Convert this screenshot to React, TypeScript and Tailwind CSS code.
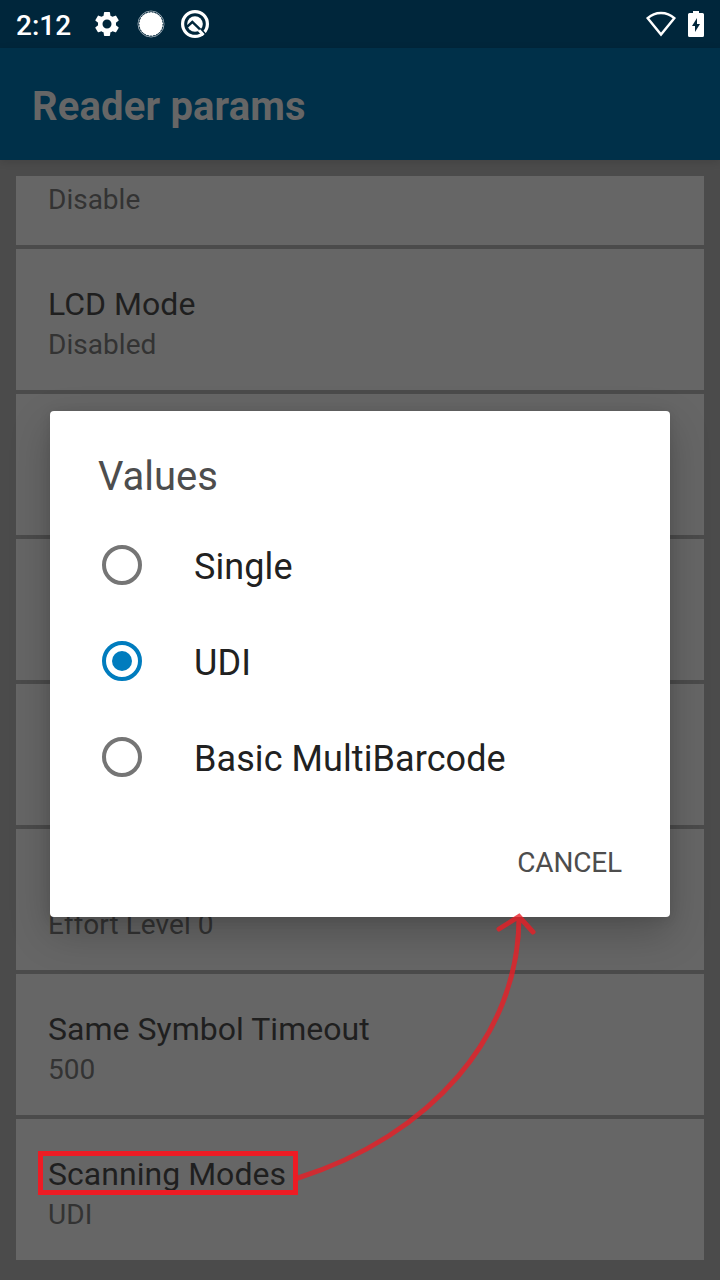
const rows = [
  { title: 'LCD Mode', value: 'Disabled' },
  { title: '', value: '' },
  { title: '', value: '' },
  { title: '', value: '' },
  { title: '', value: 'Effort Level 0' },
  { title: 'Same Symbol Timeout', value: '500' },
  { title: 'Scanning Modes', value: 'UDI' },
];

const options = ['Single', 'UDI', 'Basic MultiBarcode'];

function StatusBar() {
  return (
    <div className="flex h-12 shrink-0 items-center bg-[#00263b] text-white">
      <span className="mt-1 ml-4 w-[76px] text-[28px] leading-8 font-medium">2:12</span>
      <svg className="size-[30px]" viewBox="0 0 24 24" fill="currentColor">
        <path d="M19.14 12.94c.04-.3.06-.61.06-.94 0-.32-.02-.64-.07-.94l2.03-1.58a.49.49 0 0 0 .12-.61l-1.92-3.32a.488.488 0 0 0-.59-.22l-2.39.96c-.5-.38-1.03-.7-1.62-.94l-.36-2.54a.484.484 0 0 0-.48-.41h-3.84c-.24 0-.43.17-.47.41l-.36 2.54c-.59.24-1.13.57-1.62.94l-2.39-.96c-.22-.08-.47 0-.59.22L2.74 8.87c-.12.21-.08.47.12.61l2.03 1.58c-.05.3-.09.63-.09.94s.02.64.07.94l-2.03 1.58a.49.49 0 0 0-.12.61l1.92 3.32c.12.22.37.29.59.22l2.39-.96c.5.38 1.03.7 1.62.94l.36 2.54c.05.24.24.41.48.41h3.84c.24 0 .44-.17.47-.41l.36-2.54c.59-.24 1.13-.56 1.62-.94l2.39.96c.22.08.47 0 .59-.22l1.92-3.32c.12-.22.07-.47-.12-.61l-2.01-1.58zM12 15.6A3.6 3.6 0 1 1 12 8.4a3.6 3.6 0 0 1 0 7.2z" />
      </svg>
      <svg className="ml-[15px] size-7" viewBox="0 0 28 28">
        <circle cx="14" cy="14" r="12" fill="white" />
        <circle cx="14" cy="14" r="13" fill="none" stroke="#9aa9b3" strokeWidth="1" />
        <circle cx="14" cy="14" r="12" fill="none" stroke="#00263b" strokeWidth="1" strokeDasharray="1.5 1.5" />
      </svg>
      <svg className="ml-4 size-7" viewBox="0 0 28 28" fill="none" stroke="white">
        <circle cx="14" cy="14" r="12.4" strokeWidth="3.2" />
        <circle cx="14" cy="14" r="7.8" fill="white" stroke="none" />
        <path d="M6 16.8 11.3 12 23.2 23.4" stroke="#00263b" strokeWidth="2.4" />
        <path d="M20 20 25 24.8" stroke="#00263b" strokeWidth="2" />
        <path d="M18 20.2 22.5 25" strokeWidth="3" />
      </svg>
      <svg className="ml-auto h-[26px] w-[30px]" viewBox="0 0 30 26" fill="none" stroke="white" strokeWidth="2.5">
        <path d="M1.7 7.2C9 .2 21 .2 28.3 7.2L15 23.5Z" />
      </svg>
      <svg className="mr-4 ml-3 h-[26px] w-4" viewBox="0 0 16 26">
        <path fill="white" d="M5 0h6v2h3.5A1.5 1.5 0 0 1 16 3.500v21a1.500 1.500 0 0 1-1.500 1.500h-13A1.500 1.500 0 0 1 0 24.500v-21A1.500 1.500 0 0 1 1.500 2H5z" />
        <path fill="#00263b" d="M9 7v6h3l-5 8v-6H4z" />
      </svg>
    </div>
  );
}

function Preference({ title, value }: { title: string; value: string }) {
  return (
    <div className="flex h-[141px] shrink-0 flex-col bg-[#666] px-8 pt-9">
      <div className="h-[38px] text-[32px] leading-[38px] tracking-[0.03px] text-[#1f1f1f]">{title}</div>
      <div className="mt-[5px] h-[34px] text-[28px] leading-[34px] tracking-[0.05px] text-[#333]">{value}</div>
    </div>
  );
}

function Dialog() {
  return (
    <div className="absolute top-[411px] left-[50px] flex h-[506px] w-[620px] flex-col rounded bg-white shadow-[0_16px_40px_rgba(0,0,0,0.22),0_2px_12px_rgba(0,0,0,0.1)]">
      <h2 className="mt-[42px] ml-12 h-[47px] text-[40px] leading-[47px] text-[#4d4d4d]">Values</h2>
      <div className="mt-[17px]">
        {options.map((name) => (
          <div key={name} className="flex h-24 items-center pl-[52px] text-[36px] text-[#212121]">
            <span
              className={
                name === 'UDI'
                  ? 'flex size-10 items-center justify-center rounded-full border-4 border-[#007cbe]'
                  : 'size-10 rounded-full border-4 border-[#757575]'
              }
            >
              {name === 'UDI' && <span className="size-5 rounded-full bg-[#007cbe]" />}
            </span>
            <span className="ml-[52px] pt-[3px] leading-[42px] tracking-[0.08px]">{name}</span>
          </div>
        ))}
      </div>
      <button className="mt-[41px] mr-12 self-end text-[28px] leading-[34px] tracking-[-0.15px] text-[#4d4d4d]">CANCEL</button>
    </div>
  );
}

export default function App() {
  return (
    <div className="relative flex h-[1280px] w-[720px] flex-col overflow-hidden bg-[#4b4b4b] font-['Roboto',sans-serif]">
      <StatusBar />
      <header className="z-0 flex h-28 shrink-0 items-center bg-[#003049] pl-8 shadow-[0_2px_8px_rgba(0,0,0,0.12)]">
        <h1 className="pt-1 text-[40px] leading-[47px] font-bold tracking-[0.15px] text-[#666]">Reader params</h1>
      </header>
      <main className="mx-4 mt-4 flex flex-col gap-1">
        <div className="h-[69px] shrink-0 bg-[#666] px-8 pt-[7px] text-[28px] leading-[34px] text-[#333]">Disable</div>
        {rows.map((row, i) => (
          <Preference key={i} title={row.title} value={row.value} />
        ))}
      </main>
      <Dialog />
      <div className="absolute top-[1151px] left-[38px] h-11 w-[260px] border-5 border-[#ed1c24]" />
      <svg className="absolute top-0 left-0 h-[1280px] w-[720px]" fill="none" stroke="#ed1c24" strokeOpacity="0.78" strokeWidth="5">
        <path d="M298 1178C430 1136 519 1036 519 917M499 929 519 916.500 533 932" strokeLinecap="round" />
      </svg>
    </div>
  );
}
